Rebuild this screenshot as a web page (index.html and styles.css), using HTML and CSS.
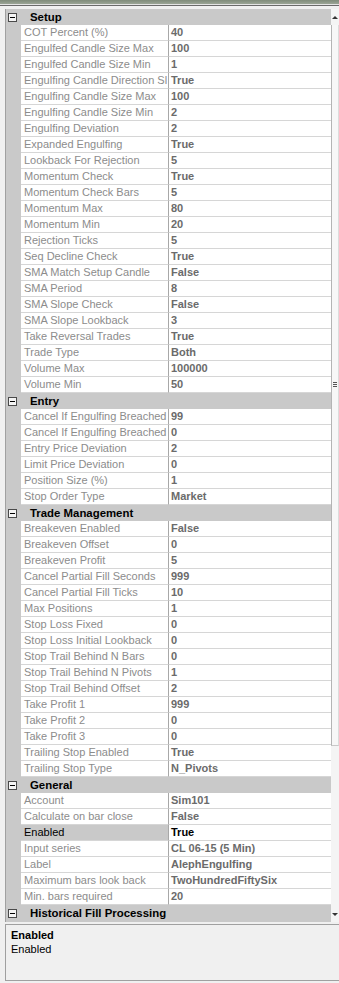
FILE: index.html
```html
<!DOCTYPE html>
<html lang="en">
<head>
    <meta charset="UTF-8">
    <meta name="viewport" content="width=device-width, initial-scale=1.0">
    <title>Strategy Properties</title>
    <link rel="stylesheet" href="styles.css">
</head>
<body>

    <div class="top-edge"></div>

    <div class="grid-frame">
        <div class="grid">

            <div class="cat"><span class="toggle"></span><span class="cat-name">Setup</span></div>
            <div class="row"><div class="name">COT Percent (%)</div><div class="val">40</div></div>
            <div class="row"><div class="name">Engulfed Candle Size Max</div><div class="val">100</div></div>
            <div class="row"><div class="name">Engulfed Candle Size Min</div><div class="val">1</div></div>
            <div class="row"><div class="name">Engulfing Candle Direction Sl</div><div class="val">True</div></div>
            <div class="row"><div class="name">Engulfing Candle Size Max</div><div class="val">100</div></div>
            <div class="row"><div class="name">Engulfing Candle Size Min</div><div class="val">2</div></div>
            <div class="row"><div class="name">Engulfing Deviation</div><div class="val">2</div></div>
            <div class="row"><div class="name">Expanded Engulfing</div><div class="val">True</div></div>
            <div class="row"><div class="name">Lookback For Rejection</div><div class="val">5</div></div>
            <div class="row"><div class="name">Momentum Check</div><div class="val">True</div></div>
            <div class="row"><div class="name">Momentum Check Bars</div><div class="val">5</div></div>
            <div class="row"><div class="name">Momentum Max</div><div class="val">80</div></div>
            <div class="row"><div class="name">Momentum Min</div><div class="val">20</div></div>
            <div class="row"><div class="name">Rejection Ticks</div><div class="val">5</div></div>
            <div class="row"><div class="name">Seq Decline Check</div><div class="val">True</div></div>
            <div class="row"><div class="name">SMA Match Setup Candle</div><div class="val">False</div></div>
            <div class="row"><div class="name">SMA Period</div><div class="val">8</div></div>
            <div class="row"><div class="name">SMA Slope Check</div><div class="val">False</div></div>
            <div class="row"><div class="name">SMA Slope Lookback</div><div class="val">3</div></div>
            <div class="row"><div class="name">Take Reversal Trades</div><div class="val">True</div></div>
            <div class="row"><div class="name">Trade Type</div><div class="val">Both</div></div>
            <div class="row"><div class="name">Volume Max</div><div class="val">100000</div></div>
            <div class="row"><div class="name">Volume Min</div><div class="val">50</div></div>

            <div class="cat"><span class="toggle"></span><span class="cat-name">Entry</span></div>
            <div class="row"><div class="name">Cancel If Engulfing Breached</div><div class="val">99</div></div>
            <div class="row"><div class="name">Cancel If Engulfing Breached</div><div class="val">0</div></div>
            <div class="row"><div class="name">Entry Price Deviation</div><div class="val">2</div></div>
            <div class="row"><div class="name">Limit Price Deviation</div><div class="val">0</div></div>
            <div class="row"><div class="name">Position Size (%)</div><div class="val">1</div></div>
            <div class="row"><div class="name">Stop Order Type</div><div class="val">Market</div></div>

            <div class="cat"><span class="toggle"></span><span class="cat-name">Trade Management</span></div>
            <div class="row"><div class="name">Breakeven Enabled</div><div class="val">False</div></div>
            <div class="row"><div class="name">Breakeven Offset</div><div class="val">0</div></div>
            <div class="row"><div class="name">Breakeven Profit</div><div class="val">5</div></div>
            <div class="row"><div class="name">Cancel Partial Fill Seconds</div><div class="val">999</div></div>
            <div class="row"><div class="name">Cancel Partial Fill Ticks</div><div class="val">10</div></div>
            <div class="row"><div class="name">Max Positions</div><div class="val">1</div></div>
            <div class="row"><div class="name">Stop Loss Fixed</div><div class="val">0</div></div>
            <div class="row"><div class="name">Stop Loss Initial Lookback</div><div class="val">0</div></div>
            <div class="row"><div class="name">Stop Trail Behind N Bars</div><div class="val">0</div></div>
            <div class="row"><div class="name">Stop Trail Behind N Pivots</div><div class="val">1</div></div>
            <div class="row"><div class="name">Stop Trail Behind Offset</div><div class="val">2</div></div>
            <div class="row"><div class="name">Take Profit 1</div><div class="val">999</div></div>
            <div class="row"><div class="name">Take Profit 2</div><div class="val">0</div></div>
            <div class="row"><div class="name">Take Profit 3</div><div class="val">0</div></div>
            <div class="row"><div class="name">Trailing Stop Enabled</div><div class="val">True</div></div>
            <div class="row"><div class="name">Trailing Stop Type</div><div class="val">N_Pivots</div></div>

            <div class="cat"><span class="toggle"></span><span class="cat-name">General</span></div>
            <div class="row"><div class="name">Account</div><div class="val">Sim101</div></div>
            <div class="row"><div class="name">Calculate on bar close</div><div class="val">False</div></div>
            <div class="row selected"><div class="name">Enabled</div><div class="val">True</div></div>
            <div class="row"><div class="name">Input series</div><div class="val">CL 06-15 (5 Min)</div></div>
            <div class="row"><div class="name">Label</div><div class="val">AlephEngulfing</div></div>
            <div class="row"><div class="name">Maximum bars look back</div><div class="val">TwoHundredFiftySix</div></div>
            <div class="row"><div class="name">Min. bars required</div><div class="val">20</div></div>

            <div class="cat"><span class="toggle"></span><span class="cat-name">Historical Fill Processing</span></div>
        </div>

        <div class="scrollbar">
            <div class="arrow up"></div>
            <div class="thumb"><span class="grip"></span></div>
            <div class="track"></div>
            <div class="arrow down"></div>
        </div>
    </div>

    <div class="desc">
        <div class="desc-title">Enabled</div>
        <div class="desc-text">Enabled</div>
    </div>

</body>
</html>
```

FILE: styles.css
```css
body {
    margin: 0;
    width: 339px;
    height: 983px;
    overflow: hidden;
    background: #f0f0f0;
    font-family: "Liberation Sans", Arial, sans-serif;
    font-size: 11px;
    color: #8c8c8c;
}

.top-edge {
    height: 4px;
    background: linear-gradient(#7f8b7a, #9aa495);
    border-bottom: 1px solid #e4e4e4;
    box-shadow: 0 1px 0 #6a6a6a;
    margin-bottom: 4px;
}

.grid-frame {
    display: flex;
    margin-left: 5px;
    border-left: 1px solid #a0a0a0;
    height: 913px;
}

.grid {
    width: 325px;
    background: #c9c9c9;
    overflow: hidden;
}

.cat {
    display: flex;
    align-items: center;
    height: 16px;
    background: #c9c9c9;
    color: #000;
    font-weight: bold;
    font-size: 11.4px;
}

.toggle {
    position: relative;
    box-sizing: border-box;
    width: 9px;
    height: 9px;
    margin: 0 0 0 2px;
    border: 1px solid #4a4a4a;
    background: #f4f4f4;
}

.toggle::after {
    content: "";
    position: absolute;
    left: 1px;
    top: 3px;
    width: 5px;
    height: 1px;
    background: #000;
}

.cat-name {
    margin-left: 13px;
}

.row {
    display: flex;
    height: 16px;
    margin-left: 15px;
}

.name, .val {
    box-sizing: border-box;
    height: 16px;
    line-height: 15px;
    border-bottom: 1px solid #d6d6d6;
    background: #fff;
    white-space: nowrap;
    overflow: hidden;
}

.name {
    width: 148px;
    padding-left: 3px;
    border-right: 1px solid #a8a8a8;
}

.val {
    flex: 1;
    padding-left: 2px;
    color: #6b6b6b;
    font-weight: bold;
}

.selected .name {
    background: #c9c9c9;
    color: #000;
}

.selected .val {
    color: #000;
}

.scrollbar {
    display: flex;
    flex-direction: column;
    width: 8px;
    background: #f4f4f4;
}

.arrow {
    height: 16px;
    display: flex;
    align-items: center;
    justify-content: center;
}

.arrow::after {
    content: "";
    border-left: 3px solid transparent;
    border-right: 3px solid transparent;
}

.arrow.up::after {
    border-bottom: 3px solid #333;
}

.arrow.down::after {
    border-top: 3px solid #333;
}

.thumb {
    height: 720px;
    display: flex;
    align-items: center;
    justify-content: center;
    border-left: 1px solid #b4b4b4;
    border-right: 1px solid #dcdcdc;
    border-bottom: 1px solid #c8c8c8;
    background: #f7f7f7;
}

.track {
    flex: 1;
}

.grip {
    width: 4px;
    height: 6px;
    background: repeating-linear-gradient(#555 0 1px, transparent 1px 2px);
}

.desc {
    box-sizing: border-box;
    margin: 2px 0 0 5px;
    height: 57px;
    padding: 3px 5px;
    border: 1px solid #a0a0a0;
    border-right: none;
    color: #000;
}

.desc-title {
    font-weight: bold;
    line-height: 14px;
}

.desc-text {
    line-height: 14px;
}
```
